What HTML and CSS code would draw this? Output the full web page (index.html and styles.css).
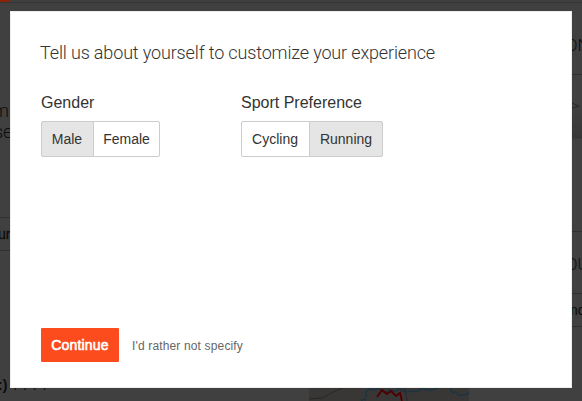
FILE: index.html
```html
<!DOCTYPE html>
<html lang="en">
<head>
<meta charset="utf-8">
<title>Customize your experience</title>
<link rel="stylesheet" href="styles.css">
</head>
<body>
<div class="page" aria-hidden="true">
  <header class="topbar"><span class="topbar-accent"></span></header>
  <div class="columns">
    <aside class="rail rail-left">
      <p class="intro">m<br><span class="tuck">se</span></p>
      <div class="tab">ur</div>
      <div class="comment">:) <span class="dots">. . . .</span></div>
    </aside>
    <main class="feed">
      <svg class="map" width="160" height="13" viewBox="0 0 160 13">
        <rect width="160" height="13" fill="#383735"/>
        <path d="M0 11L14 10L24 4L34 0M96 0L98 13" fill="none" stroke="#282826"/>
        <path d="M52 13Q57 9 56 13M58 9Q55 1 62 1Q67 4 69 0Q75 7 80 2Q86 5 91 0Q95 6 101 3Q109 5 113 0Q120 4 129 0M141 0L144 5Q149 2 149 7Q154 8 160 5" fill="none" stroke="#1c3442" stroke-width="1.5"/>
        <path d="M68 9L73 2L78 6L82 3L87 8L91 5L93 13" fill="none" stroke="#500002" stroke-width="2"/>
      </svg>
    </main>
    <aside class="rail rail-right">
      <div class="card-title">ON</div>
      <div class="card-body"><svg width="10" height="8" viewBox="0 0 10 8"><path d="M0 1L7 4L0 6" fill="none" stroke="#292929"/></svg></div>
      <div class="card-title club">OU</div>
      <div class="club-row">no</div>
    </aside>
  </div>
</div>

<section class="modal" role="dialog" aria-labelledby="title">
  <h1 class="title" id="title">Tell us about yourself to customize your experience</h1>
  <div class="fields">
    <div class="field">
      <h2 class="label">Gender</h2>
      <div class="toggle">
        <button class="option selected">Male</button><button class="option female">Female</button>
      </div>
    </div>
    <div class="field">
      <h2 class="label">Sport Preference</h2>
      <div class="toggle">
        <button class="option cycling">Cycling</button><button class="option selected running">Running</button>
      </div>
    </div>
  </div>
  <footer class="actions">
    <button class="continue">Continue</button>
    <a class="skip">I'd rather not specify</a>
  </footer>
</section>
</body>
</html>
```
FILE: styles.css
```css
* { box-sizing: border-box; margin: 0; padding: 0; }
body {
  width: 582px;
  height: 401px;
  overflow: hidden;
  font-family: "Liberation Sans", Arial, sans-serif;
  color: #333;
  background: #404040;
}
.page { height: 401px; color: #0c0c0c; }
.topbar { height: 3px; border-bottom: 1px solid #363636; }
.topbar-accent { display: block; width: 9px; height: 2px; background: #8a2308; }
.columns { display: grid; grid-template-columns: 10px 1fr 10px; height: 398px; }
.rail { min-width: 0; white-space: nowrap; }
.intro {
  height: 214px;
  padding-top: 97px;
  font: 300 18px/21px Roboto, sans-serif;
  text-indent: -7px;
}
.intro .tuck { margin-left: -6px; }
.tab {
  height: 34px;
  border-top: 1px solid #303030;
  border-bottom: 1px solid #303030;
  font-size: 14px;
  line-height: 33px;
  text-indent: -2px;
  -webkit-text-stroke: 0.3px #0c0c0c;
}
.comment { margin-top: 124px; font-size: 14px; font-weight: bold; line-height: 20px; text-indent: -2px; }
.dots { margin-left: 2px; font-weight: normal; letter-spacing: 1px; }
.feed { display: flex; align-items: flex-end; padding-left: 299px; }
.map { display: block; }
.rail-right { overflow: hidden; }
.card-title { height: 71px; padding-top: 32px; font: 300 17px/21px Roboto, sans-serif; text-indent: -6px; }
.card-body {
  height: 157px;
  padding-top: 27px;
  border-top: 1px solid #303030;
  background: linear-gradient(#404040 30px, #363636 63px, #404040 64px);
  line-height: 0;
}
.card-title.club { height: 62px; padding-top: 22px; border-top: 1px solid #303030; }
.club-row {
  height: 34px;
  border-top: 1px solid #303030;
  border-bottom: 1px solid #303030;
  font-size: 14px;
  line-height: 33px;
  text-indent: -2px;
}
.modal {
  position: absolute;
  inset: 11px 10px 13px;
  display: flex;
  flex-direction: column;
  padding: 30px 31px 26px;
  background: #fff;
  box-shadow: inset 0 0 0 1px #eee;
}
.title {
  margin-left: -1px;
  font: 300 18px/24px Roboto, "Liberation Sans", sans-serif;
  white-space: nowrap;
  letter-spacing: -0.15px;
}
.fields { display: grid; grid-template-columns: 200px 200px; margin-top: 28px; }
.label { font-size: 16px; font-weight: normal; line-height: 20px; white-space: nowrap; }
.toggle { display: flex; margin-top: 8px; }
.option {
  width: 53px;
  height: 36px;
  padding-right: 1px;
  border: 1px solid #ccc;
  border-radius: 2px 0 0 2px;
  background: #fff;
  color: #333;
  font: 14px/34px "Liberation Sans", Arial, sans-serif;
}
.option + .option { margin-left: -1px; padding-right: 0; border-radius: 0 2px 2px 0; }
.option.selected { background: #e5e5e5; }
.option.female { width: 67px; }
.option.cycling { width: 69px; }
.option.running { width: 74px; }
.actions { display: flex; align-items: center; margin-top: auto; gap: 13px; }
.continue {
  width: 78px;
  height: 34px;
  border: 0;
  border-radius: 1px;
  background: #fc4c1e;
  color: #fff;
  font: 14px/34px "Liberation Sans", Arial, sans-serif;
  letter-spacing: 0.2px;
  -webkit-text-stroke: 0.6px #fff;
}
.skip { padding-top: 2px; font-size: 12px; line-height: 32px; letter-spacing: 0.15px; color: #666; }
```
